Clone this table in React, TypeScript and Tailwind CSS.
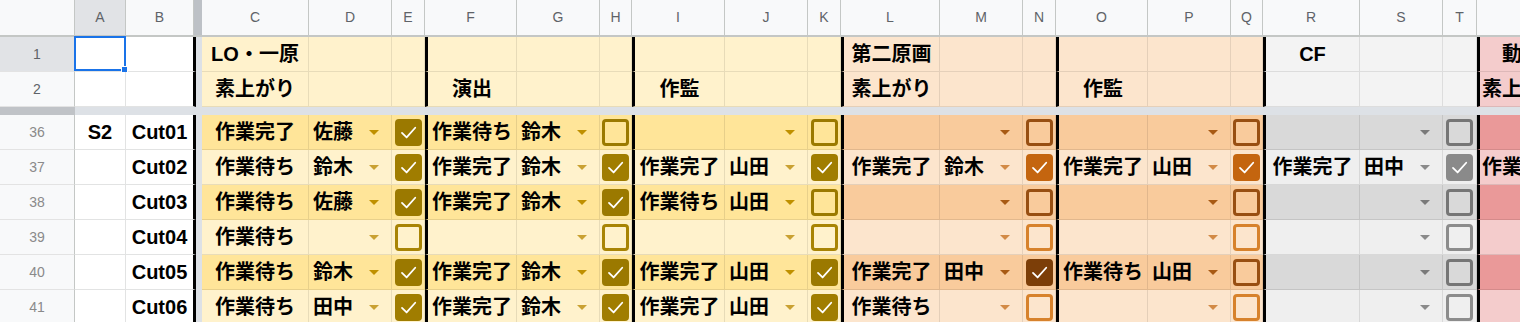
import type { ReactNode } from 'react'

type Tone = 'y' | 'o' | 'g' | 'r'
type Entry = [string, string, boolean]

const FONT = "font-['Liberation_Sans','Noto_Sans_CJK_JP',sans-serif]"
const GRID = 'border-[#00000017]'

// colours per section: index 0 = banded (dark) row, 1 = plain row
const TONES: Record<Tone, { head: string; rows: string[]; on: string[]; off: string[]; arrow: string[] }> = {
  y: {
    head: 'bg-[#fff2cc]',
    rows: ['bg-[#ffe599]', 'bg-[#fff2cc]'],
    on: ['bg-[#9b7900] border-[#9b7900]', 'bg-[#a07d00] border-[#a07d00]'],
    off: ['border-[#9b7900]', 'border-[#a88405]'],
    arrow: ['border-t-[#bf9000]', 'border-t-[#c9a132]'],
  },
  o: {
    head: 'bg-[#fce5cd]',
    rows: ['bg-[#f9cb9c]', 'bg-[#fce5cd]'],
    on: ['bg-[#7c3e08] border-[#7c3e08]', 'bg-[#c4650f] border-[#c4650f]'],
    off: ['border-[#984f12]', 'border-[#d7822c]'],
    arrow: ['border-t-[#a85a14]', 'border-t-[#d28a46]'],
  },
  g: {
    head: 'bg-[#f3f3f3]',
    rows: ['bg-[#d9d9d9]', 'bg-[#efefef]'],
    on: ['bg-[#6f6f6f] border-[#6f6f6f]', 'bg-[#8a8a8a] border-[#8a8a8a]'],
    off: ['border-[#767676]', 'border-[#8c8c8c]'],
    arrow: ['border-t-[#7a7a7a]', 'border-t-[#8a8a8a]'],
  },
  r: {
    head: 'bg-[#f4cccc]',
    rows: ['bg-[#ea9999]', 'bg-[#f4cccc]'],
    on: ['', ''],
    off: ['', ''],
    arrow: ['', ''],
  },
}

type Group = { tone: Tone; w: string[]; letters: string[]; top: string; sub: string; edge: boolean }

const GROUPS: Group[] = [
  { tone: 'y', w: ['w-[107px]', 'w-[83px]', 'w-[33px]'], letters: ['C', 'D', 'E'], top: 'LO・一原', sub: '素上がり', edge: false },
  { tone: 'y', w: ['w-[92px]', 'w-[83px]', 'w-[32px]'], letters: ['F', 'G', 'H'], top: '', sub: '演出', edge: true },
  { tone: 'y', w: ['w-[93px]', 'w-[83px]', 'w-[33px]'], letters: ['I', 'J', 'K'], top: '', sub: '作監', edge: true },
  { tone: 'o', w: ['w-[99px]', 'w-[83px]', 'w-[33px]'], letters: ['L', 'M', 'N'], top: '第二原画', sub: '素上がり', edge: true },
  { tone: 'o', w: ['w-[92px]', 'w-[83px]', 'w-[32px]'], letters: ['O', 'P', 'Q'], top: '', sub: '作監', edge: true },
  { tone: 'g', w: ['w-[97px]', 'w-[83px]', 'w-[34px]'], letters: ['R', 'S', 'T'], top: 'CF', sub: '', edge: true },
  { tone: 'r', w: ['w-[88px]'], letters: [''], top: '動画', sub: '素上がり', edge: true },
]

const E: Entry = ['', '', false]

const ROWS: { n: number; scene: string; cut: string; cells: Entry[] }[] = [
  { n: 36, scene: 'S2', cut: 'Cut01', cells: [['作業完了', '佐藤', true], ['作業待ち', '鈴木', false], E, E, E, E, E] },
  { n: 37, scene: '', cut: 'Cut02', cells: [['作業待ち', '鈴木', true], ['作業完了', '鈴木', true], ['作業完了', '山田', true], ['作業完了', '鈴木', true], ['作業完了', '山田', true], ['作業完了', '田中', true], ['作業完了', '', false]] },
  { n: 38, scene: '', cut: 'Cut03', cells: [['作業待ち', '佐藤', true], ['作業完了', '鈴木', true], ['作業待ち', '山田', false], E, E, E, E] },
  { n: 39, scene: '', cut: 'Cut04', cells: [['作業待ち', '', false], E, E, E, E, E, E] },
  { n: 40, scene: '', cut: 'Cut05', cells: [['作業待ち', '鈴木', true], ['作業完了', '鈴木', true], ['作業完了', '山田', true], ['作業完了', '田中', true], ['作業待ち', '山田', false], E, E] },
  { n: 41, scene: '', cut: 'Cut06', cells: [['作業待ち', '田中', true], ['作業完了', '鈴木', true], ['作業完了', '山田', true], ['作業待ち', '', false], E, E, E] },
]

function Check({ on, cls }: { on: boolean; cls: string }) {
  return (
    <div className={`w-[27px] h-[27px] rounded-[4px] border-[3px] flex items-center justify-center ${cls}`}>
      {on && (
        <svg viewBox="0 0 20 20" className="w-[21px] h-[21px]">
          <path d="M3.8 10.4l4.4 4.3 8.2-9.2" fill="none" stroke="white" strokeWidth="1.7" strokeLinecap="round" strokeLinejoin="round" />
        </svg>
      )}
    </div>
  )
}

function Cell({ w, bg, edge, children, className = '' }: { w: string; bg: string; edge?: boolean; children?: ReactNode; className?: string }) {
  return (
    <div
      className={`${w} ${bg} shrink-0 h-full flex items-center border-r border-b ${GRID} ${edge ? 'border-l-[3px] border-l-black' : ''} ${className}`}
    >
      {children}
    </div>
  )
}

function RowHead({ n, active, faint }: { n: number; active?: boolean; faint?: boolean }) {
  return (
    <div
      className={`w-[75px] shrink-0 h-full flex items-center justify-center text-[14px] border-r border-r-[#c4c7c5] border-b border-b-[#e3e3e3] ${
        active ? 'bg-[#e1e3e6]' : 'bg-[#f8f9fa]'
      } ${faint ? 'text-[#8a8a8a]' : 'text-[#5f6368]'}`}
    >
      {n}
    </div>
  )
}

function HeaderRow({ n, pick }: { n: number; pick: (g: Group) => string }) {
  return (
    <div className="flex h-[35px] shrink-0">
      <RowHead n={n} active={n === 1} />
      <div className="relative z-10 w-[51px] shrink-0 h-full bg-white border-r border-b border-[#e2e3e3]">
        {n === 1 && (
          <div className="absolute -left-px -top-px right-[-1px] bottom-0 border-2 border-[#1a73e8]">
            <div className="absolute -right-[4px] -bottom-[4px] w-[7px] h-[7px] bg-[#1a73e8] border border-white" />
          </div>
        )}
      </div>
      <div className="w-[70px] shrink-0 h-full bg-white border-b border-[#e2e3e3] border-r-[3px] border-r-black" />
      <div className="w-[6px] shrink-0 h-full bg-[#dde1e6]" />
      {GROUPS.map((g, gi) =>
        g.w.map((w, ci) => (
          <Cell key={`${gi}-${ci}`} w={w} bg={TONES[g.tone].head} edge={g.edge && ci === 0} className="justify-center font-bold text-[20px] text-black whitespace-nowrap overflow-hidden">
            {ci === 0 ? pick(g) : ''}
          </Cell>
        ))
      )}
    </div>
  )
}

export default function App() {
  return (
    <div className={`w-[1520px] h-[322px] overflow-hidden bg-white flex flex-col ${FONT}`}>
      {/* column letters */}
      <div className="flex h-[37px] shrink-0 bg-[#f8f9fa] border-b-2 border-[#c4c7c5] text-[14px] text-[#5f6368]">
        <div className="w-[75px] shrink-0 border-r border-[#c4c7c5]" />
        <div className="w-[51px] shrink-0 flex items-center justify-center bg-[#e1e3e6] border-r border-[#c4c7c5]">A</div>
        <div className="w-[68px] shrink-0 flex items-center justify-center border-r border-[#c4c7c5]">B</div>
        <div className="w-[8px] shrink-0 bg-[#bdc1c6]" />
        {GROUPS.map((g, gi) =>
          g.w.map((w, ci) => (
            <div key={`${gi}-${ci}`} className={`${w} shrink-0 flex items-center justify-center border-r border-[#c4c7c5]`}>
              {g.letters[ci]}
            </div>
          ))
        )}
      </div>

      <HeaderRow n={1} pick={(g) => g.top} />
      <HeaderRow n={2} pick={(g) => g.sub} />

      {/* frozen rows divider */}
      <div className="flex h-[8px] shrink-0">
        <div className="w-[75px] shrink-0 bg-[#c0c3c7]" />
        <div className="flex-1 bg-[#dde1e6]" />
      </div>

      {ROWS.map((r, ri) => {
        const band = ri % 2
        return (
          <div key={r.n} className="flex h-[35px] shrink-0 text-[20px] font-bold text-black">
            <div className="font-normal">
              <RowHead n={r.n} faint />
            </div>
            <div className="w-[51px] shrink-0 h-full flex items-center justify-center bg-white border-r border-b border-[#e2e3e3]">{r.scene}</div>
            <div className="w-[70px] shrink-0 h-full flex items-center justify-center bg-white border-b border-[#e2e3e3] border-r-[3px] border-r-black">
              {r.cut}
            </div>
            <div className="w-[6px] shrink-0 h-full bg-[#dde1e6]" />
            {GROUPS.map((g, gi) => {
              const t = TONES[g.tone]
              const [status, name, done] = r.cells[gi]
              const bg = t.rows[band]
              if (g.w.length === 1) {
                return (
                  <Cell key={gi} w={g.w[0]} bg={bg} edge={g.edge} className="justify-center whitespace-nowrap overflow-hidden">
                    {status}
                  </Cell>
                )
              }
              return [
                <Cell key={`${gi}-s`} w={g.w[0]} bg={bg} edge={g.edge} className="justify-center whitespace-nowrap">
                  {status}
                </Cell>,
                <Cell key={`${gi}-n`} w={g.w[1]} bg={bg} className="pl-[4px] whitespace-nowrap">
                  <span>{name}</span>
                  <span className={`ml-auto mr-[12px] w-0 h-0 border-x-[5px] border-x-transparent border-t-[5px] ${t.arrow[band]}`} />
                </Cell>,
                <Cell key={`${gi}-c`} w={g.w[2]} bg={bg} className="justify-center">
                  <Check on={done} cls={done ? t.on[band] : t.off[band]} />
                </Cell>,
              ]
            })}
          </div>
        )
      })}
    </div>
  )
}
